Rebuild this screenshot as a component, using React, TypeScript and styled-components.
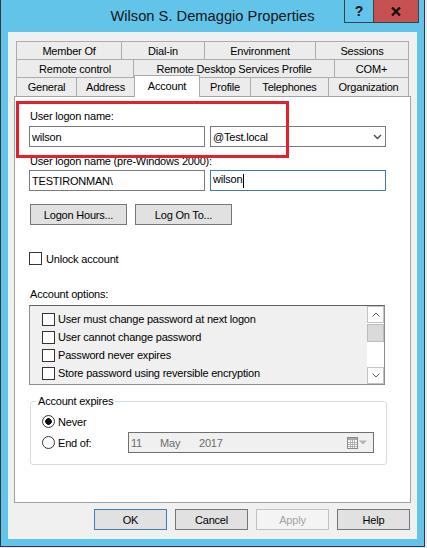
import React from 'react'
import styled, { createGlobalStyle } from 'styled-components'

const GlobalStyle = createGlobalStyle`
  html, body {
    margin: 0;
    padding: 0;
  }
  body {
    background: #e8e8e8;
    font-family: "Liberation Sans", Arial, sans-serif;
    font-size: 11px;
    letter-spacing: -0.2px;
    color: #000;
  }
  * {
    box-sizing: border-box;
  }
`

const Window = styled.div`
  width: 425px;
  height: 547px;
  display: flex;
  flex-direction: column;
  background: #62c4e9;
  border: 1px solid #2e3a40;
  border-top: none;
`

const TitleBar = styled.div`
  flex: 0 0 32px;
  display: grid;
  grid-template-columns: 1fr auto 1fr;
  align-items: start;
`

const Title = styled.div`
  grid-column: 2;
  padding-top: 7px;
  font-size: 14.7px;
  line-height: 18px;
  letter-spacing: 0;
  color: #151515;
  white-space: nowrap;
`

const CaptionButtons = styled.div`
  grid-column: 3;
  justify-self: end;
  margin-right: 5px;
  display: flex;
  height: 23px;
  border: 1px solid #37424a;
  border-top: none;
`

const HelpButton = styled.div`
  width: 28px;
  display: flex;
  align-items: center;
  justify-content: center;
  font-size: 14px;
  font-weight: bold;
  letter-spacing: 0;
  color: #111;
`

const CloseButton = styled.div`
  width: 45px;
  display: flex;
  align-items: center;
  justify-content: center;
  background: #c75050;
  border-left: 1px solid #37424a;
`

const Client = styled.div`
  flex: 1;
  margin: 0 7px 7px;
  padding: 9px 6px 0;
  background: #f0f0f0;
  display: flex;
  flex-direction: column;
`

const TabStrip = styled.div`
  display: flex;
  flex-direction: column;
  margin-left: 2px;
`

const TabRow = styled.div<{ $h: number }>`
  display: flex;
  height: ${p => p.$h}px;
`

const Tab = styled.div<{ $w: number; $active?: boolean }>`
  width: ${p => p.$w}px;
  height: ${p => (p.$active ? '22px' : '100%')};
  margin-top: ${p => (p.$active ? '-2px' : '0')};
  margin-left: -1px;
  display: flex;
  align-items: center;
  justify-content: center;
  white-space: nowrap;
  background: ${p => (p.$active ? '#fff' : '#ececec')};
  border: 1px solid #acacac;
  border-bottom: none;
  position: ${p => (p.$active ? 'relative' : 'static')};
  z-index: ${p => (p.$active ? 1 : 'auto')};
  padding-bottom: ${p => (p.$active ? '2px' : '0')};

  &:first-child {
    margin-left: 0;
  }
`

const Panel = styled.div`
  position: relative;
  height: 407px;
  padding-left: 14px;
  background: #fff;
  border: 1px solid #a3a3a3;
  display: flex;
  flex-direction: column;
  align-items: flex-start;
`

const Highlight = styled.div`
  position: absolute;
  left: 1px;
  top: 4px;
  width: 273px;
  height: 57px;
  border: 3px solid #e3202c;
  pointer-events: none;
`

const FieldLabel = styled.div<{ $mt: number }>`
  margin-top: ${p => p.$mt}px;
  padding-left: 1px;
  line-height: 15px;
  white-space: nowrap;
`

const InputRow = styled.div<{ $mt: number }>`
  margin-top: ${p => p.$mt}px;
  display: flex;
  gap: 5px;
`

const TextBox = styled.div<{ $focused?: boolean }>`
  width: 176px;
  height: 21px;
  padding: 0 3px 0 2px;
  display: flex;
  align-items: center;
  justify-content: space-between;
  background: #fff;
  border: 1px solid ${p => (p.$focused ? '#3d7bad' : '#7a7a7a')};
  white-space: nowrap;
`

const Caret = styled.span`
  display: inline-block;
  width: 1px;
  height: 14px;
  margin-left: 1px;
  vertical-align: middle;
  background: #000;
`

const ButtonRow = styled.div<{ $mt: number }>`
  margin-top: ${p => p.$mt}px;
  padding-left: 1px;
  display: flex;
  gap: 8px;
`

const PushButton = styled.div<{ $w: number; $kind?: 'default' | 'disabled' }>`
  width: ${p => p.$w}px;
  height: 21px;
  display: flex;
  align-items: center;
  justify-content: center;
  white-space: nowrap;
  background: ${p => (p.$kind === 'disabled' ? '#f4f4f4' : '#e1e1e1')};
  color: ${p => (p.$kind === 'disabled' ? '#a2a2a2' : '#000')};
  border: 1px solid
    ${p => (p.$kind === 'default' ? '#3c7fb1' : p.$kind === 'disabled' ? '#c2c2c2' : '#767676')};
`

const CheckRow = styled.div<{ $mt?: number; $gap: number }>`
  margin-top: ${p => p.$mt ?? 0}px;
  height: 15px;
  display: flex;
  align-items: center;
  gap: ${p => p.$gap}px;
  white-space: nowrap;
`

const CheckBox = styled.span`
  flex-shrink: 0;
  width: 13px;
  height: 13px;
  background: #fff;
  border: 1px solid #333;
`

const ListBox = styled.div`
  margin-top: 3px;
  width: 356px;
  height: 80px;
  display: flex;
  background: #f0f0f0;
  border: 1px solid #8d8d8d;
  border-top-color: #5f5f5f;
`

const ListItems = styled.div`
  flex: 1;
  padding: 4px 0 0 12px;
  display: flex;
  flex-direction: column;
`

const ListItem = styled.div`
  height: 18px;
  display: flex;
  align-items: center;
  gap: 3px;
  white-space: nowrap;
`

const ScrollBar = styled.div`
  width: 17px;
  display: flex;
  flex-direction: column;
  background: #fff;
`

const ScrollButton = styled.div`
  height: 17px;
  display: flex;
  align-items: center;
  justify-content: center;
  background: #fff;
  border: 1px solid #c3c3c3;
`

const ScrollThumb = styled.div`
  margin-top: 1px;
  height: 18px;
  background: #dadada;
  border: 1px solid #bdbdbd;
`

const ScrollTrack = styled.div`
  flex: 1;
`

const Group = styled.fieldset`
  margin: 9px 0 0 1px;
  padding: 2px 0 0 5px;
  width: 357px;
  height: 71px;
  min-inline-size: 0;
  border: 1px solid #d6dce3;
  border-radius: 3px;
`

const Legend = styled.legend`
  padding: 0 2px;
  line-height: 15px;
`

const ExpireRow = styled.div`
  height: 21px;
  padding-left: 6px;
  display: flex;
  align-items: center;
  white-space: nowrap;
`

const Radio = styled.span<{ $checked?: boolean }>`
  flex-shrink: 0;
  width: 13px;
  height: 13px;
  margin-right: 3px;
  border-radius: 50%;
  border: 1px solid #333;
  background: ${p =>
    p.$checked ? 'radial-gradient(circle, #111 0 3px, #fff 3.6px)' : '#fff'};
`

const RadioLabel = styled.span<{ $w?: number }>`
  width: ${p => (p.$w ? `${p.$w}px` : 'auto')};
`

const DatePicker = styled.div`
  width: 246px;
  height: 21px;
  padding: 0 6px 0 2px;
  display: flex;
  align-items: center;
  gap: 1px;
  color: #6d6d6d;
  background: #f0f0f0;
  border: 1px solid #707070;
`

const DatePart = styled.span<{ $w: number }>`
  width: ${p => p.$w}px;
`

const Spacer = styled.span`
  flex: 1;
`

const BottomBar = styled.div`
  margin-top: 6px;
  padding-right: 1px;
  display: flex;
  justify-content: flex-end;
  gap: 8px;
`

const tabRows: { h: number; tabs: [string, number][] }[] = [
  { h: 18, tabs: [['Member Of', 106], ['Dial-in', 84], ['Environment', 112], ['Sessions', 94]] },
  { h: 18, tabs: [['Remote control', 118], ['Remote Desktop Services Profile', 202], ['COM+', 75]] },
  {
    h: 19,
    tabs: [
      ['General', 61],
      ['Address', 59],
      ['Account', 66],
      ['Profile', 52],
      ['Telephones', 79],
      ['Organization', 81],
    ],
  },
]

const accountOptions = [
  'User must change password at next logon',
  'User cannot change password',
  'Password never expires',
  'Store password using reversible encryption',
]

const Chevron = ({ up, color = '#606060' }: { up?: boolean; color?: string }) => (
  <svg width="8" height="5" viewBox="0 0 8 5">
    <path
      d={up ? 'M0.5 4.5 L4 1 L7.5 4.5' : 'M0.5 0.5 L4 4 L7.5 0.5'}
      fill="none"
      stroke={color}
      strokeWidth="1"
    />
  </svg>
)

const CalendarIcon = () => (
  <svg width="11" height="12" viewBox="0 0 11 12">
    <rect x="0.5" y="0.5" width="10" height="11" fill="#fbfbfb" stroke="#8c8c8c" />
    <rect x="1" y="1" width="9" height="2" fill="#a9a9a9" />
    <path d="M3.5 3 V11 M5.5 3 V11 M7.5 3 V11 M1 5.5 H10 M1 7.5 H10 M1 9.5 H10" stroke="#b3b3b3" strokeWidth="1" />
  </svg>
)

export default function App() {
  return (
    <>
      <GlobalStyle />
      <Window>
        <TitleBar>
          <Title>Wilson S. Demaggio Properties</Title>
          <CaptionButtons>
            <HelpButton>?</HelpButton>
            <CloseButton>
              <svg width="10" height="9" viewBox="0 0 10 9">
                <path d="M1 0.5 L9 8.5 M9 0.5 L1 8.5" stroke="#111" strokeWidth="2.3" />
              </svg>
            </CloseButton>
          </CaptionButtons>
        </TitleBar>

        <Client>
          <TabStrip>
            {tabRows.map((row, i) => (
              <TabRow key={i} $h={row.h}>
                {row.tabs.map(([label, w]) => (
                  <Tab key={label} $w={w} $active={label === 'Account'}>
                    {label}
                  </Tab>
                ))}
              </TabRow>
            ))}
          </TabStrip>

          <Panel>
            <FieldLabel $mt={12}>User logon name:</FieldLabel>
            <InputRow $mt={2}>
              <TextBox>wilson</TextBox>
              <TextBox>
                <span>@Test.local</span>
                <svg width="9" height="6" viewBox="0 0 9 6">
                  <path d="M1 1 L4.5 4.5 L8 1" fill="none" stroke="#4a4a4a" strokeWidth="1.4" />
                </svg>
              </TextBox>
            </InputRow>

            <FieldLabel $mt={7}>User logon name (pre-Windows 2000):</FieldLabel>
            <InputRow $mt={1}>
              <TextBox>TESTIRONMAN\</TextBox>
              <TextBox $focused>
                <span>
                  wilson
                  <Caret />
                </span>
              </TextBox>
            </InputRow>

            <ButtonRow $mt={13}>
              <PushButton $w={97}>Logon Hours...</PushButton>
              <PushButton $w={97}>Log On To...</PushButton>
            </ButtonRow>

            <CheckRow $mt={26} $gap={4}>
              <CheckBox />
              Unlock account
            </CheckRow>

            <FieldLabel $mt={21}>Account options:</FieldLabel>
            <ListBox>
              <ListItems>
                {accountOptions.map(opt => (
                  <ListItem key={opt}>
                    <CheckBox />
                    {opt}
                  </ListItem>
                ))}
              </ListItems>
              <ScrollBar>
                <ScrollButton>
                  <Chevron up />
                </ScrollButton>
                <ScrollThumb />
                <ScrollTrack />
                <ScrollButton>
                  <Chevron />
                </ScrollButton>
              </ScrollBar>
            </ListBox>

            <Group>
              <Legend>Account expires</Legend>
              <ExpireRow>
                <Radio $checked />
                <RadioLabel>Never</RadioLabel>
              </ExpireRow>
              <ExpireRow>
                <Radio />
                <RadioLabel $w={70}>End of:</RadioLabel>
                <DatePicker>
                  <DatePart $w={28}>11</DatePart>
                  <DatePart $w={38}>May</DatePart>
                  <DatePart $w={30}>2017</DatePart>
                  <Spacer />
                  <CalendarIcon />
                  <svg width="8" height="5" viewBox="0 0 8 5">
                    <path d="M0 0.5 H8 L4 4.5 Z" fill="#b5b5b5" />
                  </svg>
                </DatePicker>
              </ExpireRow>
            </Group>

            <Highlight />
          </Panel>

          <BottomBar>
            <PushButton $w={73} $kind="default">OK</PushButton>
            <PushButton $w={73}>Cancel</PushButton>
            <PushButton $w={73} $kind="disabled">Apply</PushButton>
            <PushButton $w={73}>Help</PushButton>
          </BottomBar>
        </Client>
      </Window>
    </>
  )
}
